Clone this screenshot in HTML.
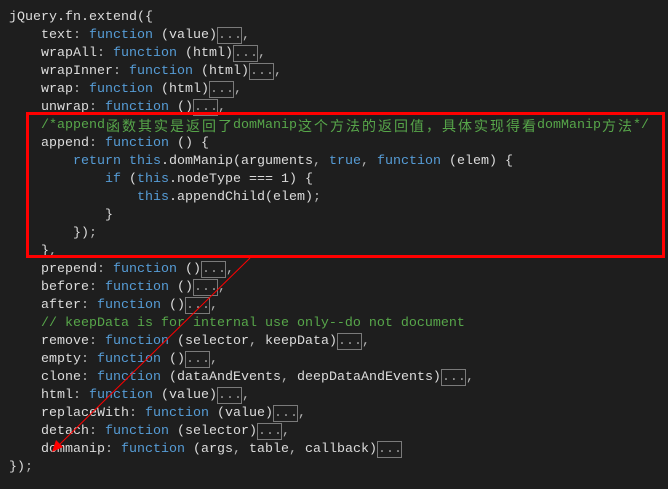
<!DOCTYPE html>
<html><head><meta charset="utf-8"><style>
html,body{margin:0;padding:0;background:#1e1e1e;width:668px;height:489px;overflow:hidden}
pre{margin:0;position:absolute;left:9px;top:9px;font-family:"Liberation Mono","Noto Sans CJK SC",monospace;font-size:13.33px;line-height:18px;color:#dcdcdc}
.k{color:#569cd6}.c{color:#57a64a}.p{color:#b4b4b4}
.f{display:inline-block;border:1px solid #7a7a7a;color:#9a9a9a;height:17px;line-height:15px;vertical-align:top;margin-top:0;box-sizing:border-box;width:25px}
.cj{font-family:"Noto Sans CJK SC",sans-serif;display:inline-block;width:16px;text-align:center;font-size:14px;line-height:18px;vertical-align:top}
#box{position:absolute;left:26px;top:112px;width:633px;height:140px;border:3px solid #f00}
svg{position:absolute;left:0;top:0}
</style></head><body>
<pre>jQuery.fn.extend({
    text<span class="p">:</span> <span class="k">function</span> (value)<span class="f">...</span><span class="p">,</span>
    wrapAll<span class="p">:</span> <span class="k">function</span> (html)<span class="f">...</span><span class="p">,</span>
    wrapInner<span class="p">:</span> <span class="k">function</span> (html)<span class="f">...</span><span class="p">,</span>
    wrap<span class="p">:</span> <span class="k">function</span> (html)<span class="f">...</span><span class="p">,</span>
    unwrap<span class="p">:</span> <span class="k">function</span> ()<span class="f">...</span><span class="p">,</span>
    <span class="c">/*append<span class="cj">函</span><span class="cj">数</span><span class="cj">其</span><span class="cj">实</span><span class="cj">是</span><span class="cj">返</span><span class="cj">回</span><span class="cj">了</span>domManip<span class="cj">这</span><span class="cj">个</span><span class="cj">方</span><span class="cj">法</span><span class="cj">的</span><span class="cj">返</span><span class="cj">回</span><span class="cj">值</span><span class="cj">，</span><span class="cj">具</span><span class="cj">体</span><span class="cj">实</span><span class="cj">现</span><span class="cj">得</span><span class="cj">看</span>domManip<span class="cj">方</span><span class="cj">法</span>*/</span>
    append<span class="p">:</span> <span class="k">function</span> () {
        <span class="k">return</span> <span class="k">this</span>.domManip(arguments<span class="p">,</span> <span class="k">true</span><span class="p">,</span> <span class="k">function</span> (elem) {
            <span class="k">if</span> (<span class="k">this</span>.nodeType === 1) {
                <span class="k">this</span>.appendChild(elem)<span class="p">;</span>
            }
        })<span class="p">;</span>
    }<span class="p">,</span>
    prepend<span class="p">:</span> <span class="k">function</span> ()<span class="f">...</span><span class="p">,</span>
    before<span class="p">:</span> <span class="k">function</span> ()<span class="f">...</span><span class="p">,</span>
    after<span class="p">:</span> <span class="k">function</span> ()<span class="f">...</span><span class="p">,</span>
    <span class="c">// keepData is for internal use only--do not document</span>
    remove<span class="p">:</span> <span class="k">function</span> (selector<span class="p">,</span> keepData)<span class="f">...</span><span class="p">,</span>
    empty<span class="p">:</span> <span class="k">function</span> ()<span class="f">...</span><span class="p">,</span>
    clone<span class="p">:</span> <span class="k">function</span> (dataAndEvents<span class="p">,</span> deepDataAndEvents)<span class="f">...</span><span class="p">,</span>
    html<span class="p">:</span> <span class="k">function</span> (value)<span class="f">...</span><span class="p">,</span>
    replaceWith<span class="p">:</span> <span class="k">function</span> (value)<span class="f">...</span><span class="p">,</span>
    detach<span class="p">:</span> <span class="k">function</span> (selector)<span class="f">...</span><span class="p">,</span>
    dommanip<span class="p">:</span> <span class="k">function</span> (args<span class="p">,</span> table<span class="p">,</span> callback)<span class="f">...</span>
})<span class="p">;</span></pre>
<div id="box"></div>
<svg width="668" height="489"><line x1="250" y1="258" x2="58" y2="446" stroke="#f00" stroke-width="1"/><polygon points="52,452 56,440 63,447" fill="#f00"/></svg>
</body></html>
